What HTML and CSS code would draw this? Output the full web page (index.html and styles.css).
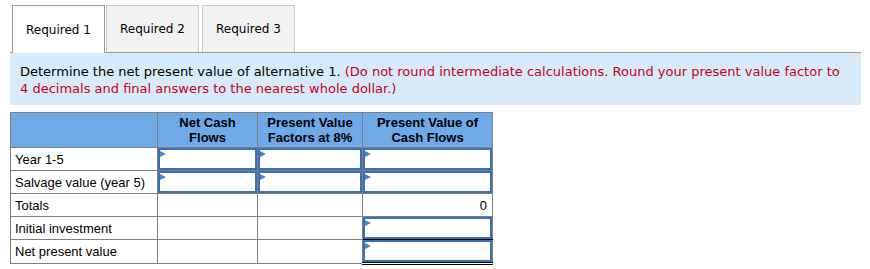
FILE: index.html
```html
<!DOCTYPE html>
<html>

<head>
	<title>Alternative 1 - Net Present Value</title>
	<link rel="stylesheet" href="styles.css">
</head>

<body>
	<div class="question">
		<div class="tabs">
			<div class="tab active">Required 1</div>
			<div class="tab">Required 2</div>
			<div class="tab">Required 3</div>
		</div>

		<div class="instructions">
			Determine the net present value of alternative 1.
			<span class="note">(Do not round intermediate calculations. Round your present value factor to 4 decimals and final answers to the nearest whole dollar.)</span>
		</div>

		<table class="npv-table">
			<colgroup>
				<col class="col-label">
				<col class="col-flows">
				<col class="col-factor">
				<col class="col-pv">
			</colgroup>
			<thead>
				<tr>
					<th></th>
					<th>Net Cash<br>Flows</th>
					<th>Present Value<br>Factors at 8%</th>
					<th>Present Value of<br>Cash Flows</th>
				</tr>
			</thead>
			<tbody>
				<tr>
					<td>Year 1-5</td>
					<td class="entry"><input type="text"></td>
					<td class="entry"><input type="text"></td>
					<td class="entry"><input type="text"></td>
				</tr>
				<tr>
					<td>Salvage value (year 5)</td>
					<td class="entry"><input type="text"></td>
					<td class="entry"><input type="text"></td>
					<td class="entry"><input type="text"></td>
				</tr>
				<tr>
					<td>Totals</td>
					<td></td>
					<td></td>
					<td class="amount">0</td>
				</tr>
				<tr>
					<td>Initial investment</td>
					<td></td>
					<td></td>
					<td class="entry underline"><input type="text"></td>
				</tr>
				<tr>
					<td>Net present value</td>
					<td></td>
					<td></td>
					<td class="entry double-underline"><input type="text"></td>
				</tr>
			</tbody>
		</table>
	</div>
</body>

</html>
```

FILE: styles.css
```css
body {
	margin: 0;
	padding: 5px 9px 0 10px;
	background: white;
	font-family: "DejaVu Sans", Verdana, sans-serif;
	color: #000;
}

.tabs {
	display: flex;
	gap: 1px;
	padding-left: 2px;
	border-bottom: 1px solid #999;
	height: 47px;
}

.tab {
	width: 91px;
	display: flex;
	align-items: center;
	justify-content: center;
	font-size: 12px;
	background: #f2f2f2;
	border: 1px solid #c8c8c8;
	border-bottom: none;
}

.tab:last-child {
	margin-left: 2px;
}

.tab.active {
	background: white;
	border-color: #999;
	margin-bottom: -1px;
	height: 47px;
}

.instructions {
	background: #d7eaf9;
	padding: 10px 10px 8px;
	font-size: 13px;
	line-height: 17px;
}

.note {
	color: #c9001b;
}

.npv-table {
	margin-top: 7px;
	border-collapse: collapse;
	table-layout: fixed;
	width: 482px;
	font-family: "Liberation Sans", Arial, sans-serif;
	font-size: 13px;
}

.col-label { width: 147px; }
.col-flows { width: 100px; }
.col-factor { width: 105px; }
.col-pv { width: 130px; }

.npv-table th,
.npv-table td {
	border: 1px solid #7f7f7f;
}

.npv-table th {
	background: #6fa9e8;
	height: 34px;
	padding: 0 2px;
	font-weight: bold;
	line-height: 15px;
	text-align: center;
}

.npv-table td {
	height: 22px;
	padding: 0 4px;
}

.npv-table td.amount {
	text-align: right;
	padding-right: 5px;
}

.npv-table td.entry {
	position: relative;
	padding: 0;
}

.entry input {
	display: block;
	box-sizing: border-box;
	width: 100%;
	height: 22px;
	margin: 0;
	border: 2px solid #3a6fb6;
	font: inherit;
	text-align: right;
}

/* little marker in the corner of each answer box */
.entry::before {
	content: "";
	position: absolute;
	top: 3px;
	left: 2px;
	border-left: 6px solid #3f86d9;
	border-top: 3px solid transparent;
	border-bottom: 3px solid transparent;
}

.npv-table td.underline {
	border-bottom-color: #000;
}

.npv-table td.double-underline {
	border-bottom: 3px double #000;
}
```
